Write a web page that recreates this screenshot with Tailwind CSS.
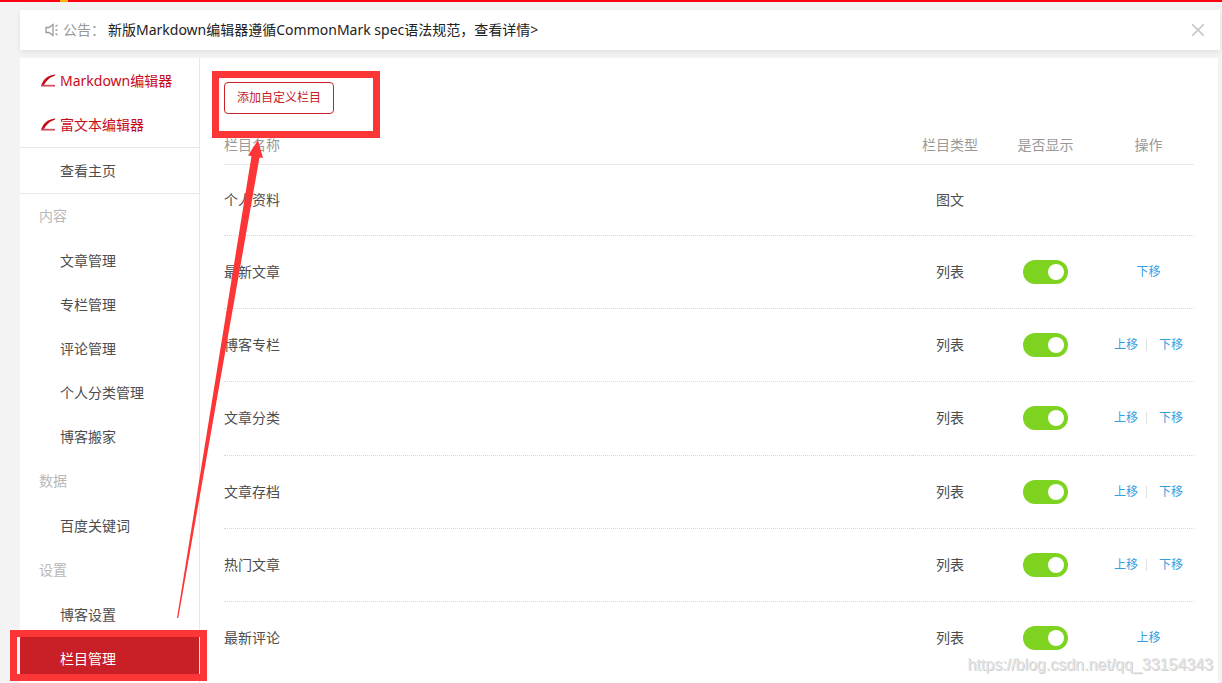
<!doctype html>
<html lang="zh-CN">
  <head>
    <meta charset="UTF-8" />
    <meta name="viewport" content="width=device-width, initial-scale=1.0" />
    <title>栏目管理</title>
    <script src="https://cdn.jsdelivr.net/npm/@tailwindcss/browser@4"></script>
  </head>
  <body class="relative flex min-h-screen flex-col bg-[#f3f3f3] font-['Noto_Sans','Noto_Sans_CJK_SC',sans-serif] text-sm text-[#4d4d4d]">
    <header class="relative h-[2px] bg-[#fa0010]">
      <span class="absolute left-[60px] top-0 h-[2px] w-2 bg-[#ffb400]"></span>
    </header>

    <div class="mt-2 ml-5 mr-[2px] flex h-10 items-center bg-white pl-[25px] pr-4 shadow-[0_2px_6px_rgba(0,0,0,0.08)]">
      <svg class="mr-1 size-[14px] shrink-0" viewBox="0 0 14 14" fill="none" stroke="#999" stroke-width="1.3">
        <path d="M1 4.500h3L8 1.500v11L4 9.500H1z" />
        <path d="M10.500 3.500l2-1.500M10.500 7h2M10.500 10.500l2 1.500" />
      </svg>
      <span class="text-[#999]">公告：</span>
      <a href="#" class="ml-[3px] text-[#222]">新版Markdown编辑器遵循CommonMark spec语法规范，查看详情&gt;</a>
      <button type="button" aria-label="关闭" class="ml-auto">
        <svg class="size-3" viewBox="0 0 12 12" stroke="#c8c8c8" stroke-width="1.600">
          <path d="M0 0l12 12M12 0L0 12" />
        </svg>
      </button>
    </div>

    <div class="mt-2 ml-5 mr-1 flex flex-1 bg-white">
      <aside class="w-[180px] shrink-0 border-r border-[#e8e8e8]">
        <nav>
          <div class="border-b border-[#e8e8e8] pt-px text-[#c70a18]">
            <a href="#" class="flex h-11 items-center pl-5">
              <svg class="mr-[4px] size-4" viewBox="0 0 16 16">
                <path d="M1 13C3 7 7 2 15.500 1.500L14.500 3C10 4 6.500 7.500 4 12z" fill="#c70a18" />
                <path d="M1 12.700h14" stroke="#d4525b" stroke-width="1.800" />
              </svg>
              Markdown编辑器
            </a>
            <a href="#" class="flex h-11 items-center pl-5">
              <svg class="mr-[4px] size-4" viewBox="0 0 16 16">
                <path d="M1 13C3 7 7 2 15.500 1.500L14.500 3C10 4 6.500 7.500 4 12z" fill="#c70a18" />
                <path d="M1 12.700h14" stroke="#d4525b" stroke-width="1.800" />
              </svg>
              富文本编辑器
            </a>
          </div>
          <a href="#" class="flex h-[46px] items-center border-b border-[#e8e8e8] pl-10">查看主页</a>
          <h2 class="mb-px flex h-11 items-center pl-[19px] text-[#b8b8b8]">内容</h2>
          <a href="#" class="flex h-11 items-center pl-10">文章管理</a>
          <a href="#" class="flex h-11 items-center pl-10">专栏管理</a>
          <a href="#" class="flex h-11 items-center pl-10">评论管理</a>
          <a href="#" class="flex h-11 items-center pl-10">个人分类管理</a>
          <a href="#" class="flex h-11 items-center pl-10">博客搬家</a>
          <h2 class="mb-px flex h-11 items-center pl-[19px] text-[#b8b8b8]">数据</h2>
          <a href="#" class="flex h-11 items-center pl-10">百度关键词</a>
          <h2 class="mb-px flex h-11 items-center pl-[19px] text-[#b8b8b8]">设置</h2>
          <a href="#" class="flex h-11 items-center pl-10">博客设置</a>
          <a href="#" class="flex h-11 items-center bg-[#c92027] pl-10 text-white">栏目管理</a>
        </nav>
      </aside>

      <main class="flex-1 px-6 pt-6">
        <button type="button" class="flex h-8 items-center rounded border border-[#c92027] px-3 text-xs text-[#c92027]">添加自定义栏目</button>
        <table class="mt-3 w-full table-fixed border-collapse text-center">
          <thead>
            <tr class="h-[38px] border-b border-[#e8e8e8] text-[#999]">
              <th class="text-left font-normal">栏目名称</th>
              <th class="w-[76px] font-normal">栏目类型</th>
              <th class="w-[115px] font-normal">是否显示</th>
              <th class="w-[91px] font-normal">操作</th>
            </tr>
          </thead>
          <tbody>
            <tr class="h-[71px] border-b border-dotted border-[#d8d8d8]">
              <td class="text-left">个人资料</td>
              <td>图文</td>
              <td></td>
              <td></td>
            </tr>
            <tr class="h-[73px] border-b border-dotted border-[#d8d8d8]">
              <td class="text-left">最新文章</td>
              <td>列表</td>
              <td><input type="checkbox" checked aria-label="显示最新文章" class="relative block mx-auto h-6 w-[45px] appearance-none rounded-full bg-[#7ed321] before:absolute before:right-1 before:top-1 before:size-4 before:rounded-full before:bg-white" /></td>
              <td class="text-xs text-[#349edf]"><a href="#">下移</a></td>
            </tr>
            <tr class="h-[73px] border-b border-dotted border-[#d8d8d8]">
              <td class="text-left">博客专栏</td>
              <td>列表</td>
              <td><input type="checkbox" checked aria-label="显示博客专栏" class="relative block mx-auto h-6 w-[45px] appearance-none rounded-full bg-[#7ed321] before:absolute before:right-1 before:top-1 before:size-4 before:rounded-full before:bg-white" /></td>
              <td class="text-xs text-[#349edf]">
                <div class="flex items-center justify-center">
                  <a href="#">上移</a><span class="ml-2 mr-3 h-3 w-px bg-[#e0e0e0]"></span><a href="#">下移</a>
                </div>
              </td>
            </tr>
            <tr class="h-[74px] border-b border-dotted border-[#d8d8d8]">
              <td class="text-left">文章分类</td>
              <td>列表</td>
              <td><input type="checkbox" checked aria-label="显示文章分类" class="relative block mx-auto h-6 w-[45px] appearance-none rounded-full bg-[#7ed321] before:absolute before:right-1 before:top-1 before:size-4 before:rounded-full before:bg-white" /></td>
              <td class="text-xs text-[#349edf]">
                <div class="flex items-center justify-center">
                  <a href="#">上移</a><span class="ml-2 mr-3 h-3 w-px bg-[#e0e0e0]"></span><a href="#">下移</a>
                </div>
              </td>
            </tr>
            <tr class="h-[73px] border-b border-dotted border-[#d8d8d8]">
              <td class="text-left">文章存档</td>
              <td>列表</td>
              <td><input type="checkbox" checked aria-label="显示文章存档" class="relative block mx-auto h-6 w-[45px] appearance-none rounded-full bg-[#7ed321] before:absolute before:right-1 before:top-1 before:size-4 before:rounded-full before:bg-white" /></td>
              <td class="text-xs text-[#349edf]">
                <div class="flex items-center justify-center">
                  <a href="#">上移</a><span class="ml-2 mr-3 h-3 w-px bg-[#e0e0e0]"></span><a href="#">下移</a>
                </div>
              </td>
            </tr>
            <tr class="h-[73px] border-b border-dotted border-[#d8d8d8]">
              <td class="text-left">热门文章</td>
              <td>列表</td>
              <td><input type="checkbox" checked aria-label="显示热门文章" class="relative block mx-auto h-6 w-[45px] appearance-none rounded-full bg-[#7ed321] before:absolute before:right-1 before:top-1 before:size-4 before:rounded-full before:bg-white" /></td>
              <td class="text-xs text-[#349edf]">
                <div class="flex items-center justify-center">
                  <a href="#">上移</a><span class="ml-2 mr-3 h-3 w-px bg-[#e0e0e0]"></span><a href="#">下移</a>
                </div>
              </td>
            </tr>
            <tr class="h-[73px]">
              <td class="text-left">最新评论</td>
              <td>列表</td>
              <td><input type="checkbox" checked aria-label="显示最新评论" class="relative block mx-auto h-6 w-[45px] appearance-none rounded-full bg-[#7ed321] before:absolute before:right-1 before:top-1 before:size-4 before:rounded-full before:bg-white" /></td>
              <td class="text-xs text-[#349edf]"><a href="#">上移</a></td>
            </tr>
          </tbody>
        </table>
      </main>
    </div>

    <!-- annotations over the page -->
    <div class="pointer-events-none absolute left-[212px] top-[71px] h-[67px] w-[168px] border-7 border-[#fc3636]"></div>
    <div class="pointer-events-none absolute left-[10px] top-[630px] h-[51px] w-[197px] border-7 border-[#fc3636]"></div>
    <svg class="pointer-events-none absolute left-[170px] top-[138px] h-[490px] w-[100px]" viewBox="170 138 100 490" fill="#fc3636">
      <path d="M177 618L251.500 156L248 155.500L258 140L263 158L259.500 157.500L178.300 618z" />
    </svg>
    <p class="pointer-events-none absolute right-[9px] top-[653px] font-['Liberation_Sans',sans-serif] text-base text-[#e4e4e4] text-shadow-[1px_1px_0_#d0d0d0]">https://blog.csdn.net/qq_33154343</p>
  </body>
</html>
